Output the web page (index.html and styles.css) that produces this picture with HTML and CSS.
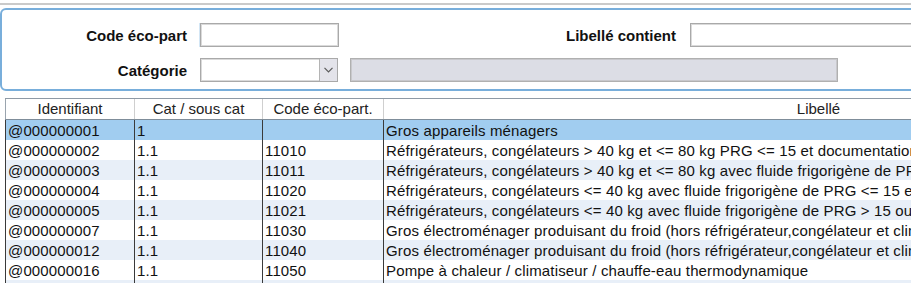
FILE: index.html
```html
<!DOCTYPE html>
<html lang="fr">
<head>
<meta charset="utf-8">
<title>Eco-part</title>
<link rel="stylesheet" href="styles.css">
</head>
<body>
<div class="topline"></div>
<div class="panel">
  <div class="frow">
    <label class="lbl w1">Code éco-part</label>
    <div class="inp w-code focus"></div>
    <label class="lbl w2">Libellé contient</label>
    <div class="inp w-lib"></div>
  </div>
  <div class="frow">
    <label class="lbl w1">Catégorie</label>
    <div class="sel">
      <div class="sel-val"></div>
      <div class="sel-btn"><svg width="9" height="6" viewBox="0 0 9 6"><polyline points="0.5,0.8 4.5,4.8 8.5,0.8" fill="none" stroke="#5a5a5a" stroke-width="1.2"/></svg></div>
    </div>
    <div class="ro"></div>
  </div>
</div>
<div class="grid">
  <div class="row head">
    <div class="c">Identifiant</div>
    <div class="c">Cat / sous cat</div>
    <div class="c">Code éco-part.</div>
    <div class="c">Libellé</div>
  </div>
  <div class="row sel-row">
    <div class="c">@000000001</div><div class="c">1</div><div class="c"></div><div class="c">Gros appareils ménagers</div>
  </div>
  <div class="row">
    <div class="c">@000000002</div><div class="c">1.1</div><div class="c">11010</div><div class="c">Réfrigérateurs, congélateurs &gt; 40 kg et &lt;= 80 kg PRG &lt;= 15 et documentation</div>
  </div>
  <div class="row alt">
    <div class="c">@000000003</div><div class="c">1.1</div><div class="c">11011</div><div class="c">Réfrigérateurs, congélateurs &gt; 40 kg et &lt;= 80 kg avec fluide frigorigène de PRG &gt; 15</div>
  </div>
  <div class="row">
    <div class="c">@000000004</div><div class="c">1.1</div><div class="c">11020</div><div class="c">Réfrigérateurs, congélateurs &lt;= 40 kg avec fluide frigorigène de PRG &lt;= 15 et documentation</div>
  </div>
  <div class="row alt">
    <div class="c">@000000005</div><div class="c">1.1</div><div class="c">11021</div><div class="c">Réfrigérateurs, congélateurs &lt;= 40 kg avec fluide frigorigène de PRG &gt; 15 ou sans documentation</div>
  </div>
  <div class="row">
    <div class="c">@000000007</div><div class="c">1.1</div><div class="c">11030</div><div class="c">Gros électroménager produisant du froid (hors réfrigérateur,congélateur et climatiseur)</div>
  </div>
  <div class="row alt">
    <div class="c">@000000012</div><div class="c">1.1</div><div class="c">11040</div><div class="c">Gros électroménager produisant du froid (hors réfrigérateur,congélateur et climatiseur)</div>
  </div>
  <div class="row">
    <div class="c">@000000016</div><div class="c">1.1</div><div class="c">11050</div><div class="c">Pompe à chaleur / climatiseur / chauffe-eau thermodynamique</div>
  </div>
  <div class="row alt">
    <div class="c"></div><div class="c"></div><div class="c"></div><div class="c"></div>
  </div>
</div>
</body>
</html>
```

FILE: styles.css
```css
html, body {
  margin: 0;
  padding: 0;
  background: #ffffff;
  overflow: hidden;
}
body {
  font-family: "Liberation Sans", Arial, sans-serif;
  font-size: 15px;
  color: #111111;
  width: 911px;
  height: 283px;
}
.topline {
  margin-top: 3px;
  height: 2px;
  background: #cacaca;
  width: 911px;
}
.panel {
  margin-top: 3px;
  width: 1000px;
  border: 2px solid #78aedb;
  border-radius: 6px;
  padding: 13px 0 7px 0;
  display: flex;
  flex-direction: column;
  gap: 11px;
  box-sizing: border-box;
}
.frow {
  display: flex;
  align-items: center;
  height: 24px;
}
.lbl {
  font-weight: bold;
  text-align: right;
  color: #111111;
  flex: none;
}
.w1 { width: 185px; margin-right: 13px; }
.w2 { width: 337px; margin-right: 14px; }
.inp {
  height: 24px;
  box-sizing: border-box;
  border: 1px solid #a9a9a9;
  box-shadow: inset 0 0 0 1px #dadada;
  background: #ffffff;
  flex: none;
}
.focus { box-shadow: inset 0 0 0 1px #dadada, -1px 0 0 #d3e6f5; }
.w-code { width: 139px; }
.w-lib { width: 300px; }
.sel {
  width: 138px;
  height: 24px;
  box-sizing: border-box;
  border: 1px solid #a9a9a9;
  box-shadow: inset 0 0 0 1px #dadada;
  display: flex;
  margin-right: 12px;
  flex: none;
}
.sel-val { flex: 1; }
.sel-btn {
  width: 17px;
  border-left: 1px solid #b4b4b4;
  background: #e3e3ea;
  display: flex;
  align-items: center;
  justify-content: center;
}
.ro {
  width: 488px;
  height: 24px;
  box-sizing: border-box;
  border: 1px solid #b0b0b0;
  box-shadow: inset 0 0 0 1px #c8c8cc;
  background: #dcdde5;
  flex: none;
}
.grid {
  margin-top: 7px;
  margin-left: 5px;
  width: 1249px;
}
.row {
  display: grid;
  grid-template-columns: 129px 128px 121px 870px;
  height: 20px;
  background: #ffffff;
}
.row .c {
  border-left: 1px solid #3a3a3a;
  padding-left: 2px;
  padding-top: 1px;
  height: 20px;
  box-sizing: border-box;
  line-height: 20px;
  letter-spacing: 0.15px;
  white-space: nowrap;
  overflow: hidden;
  color: #111111;
}
.row.alt { background: #e8eff8; }
.row.sel-row { background: #a1cdf0; }
.row.head {
  height: 20px;
  border-top: 1px solid #8e9aa6;
  border-bottom: 1px solid #7f8d9a;
  background: #ffffff;
}
.row.head .c {
  border-left: 1px solid #cfcfcf;
  text-align: center;
  padding-left: 0;
  padding-top: 0;
  letter-spacing: 0;
  color: #222222;
}
.row.head .c:first-child { border-left-color: #9aa4ae; }
```
